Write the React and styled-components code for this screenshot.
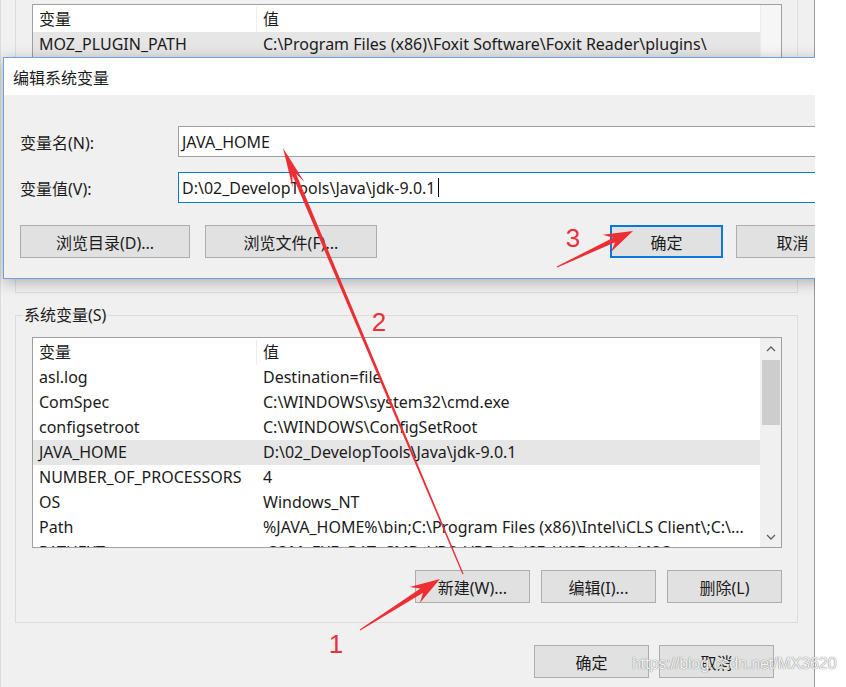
import React from 'react'
import styled, { createGlobalStyle } from 'styled-components'

const GlobalStyle = createGlobalStyle`
  html, body {
    margin: 0;
    padding: 0;
    background: #fff;
  }
  body {
    font-family: "Noto Sans", "Noto Sans CJK SC", sans-serif;
    font-size: 16px;
    color: #1b1b1b;
  }
  * {
    box-sizing: border-box;
  }
`

const userVars = [
  { name: 'MOZ_PLUGIN_PATH', value: 'C:\\Program Files (x86)\\Foxit Software\\Foxit Reader\\plugins\\', selected: true },
  { name: 'OneDrive', value: 'C:\\Users\\Administrator\\OneDrive' },
  { name: 'Path', value: 'C:\\Users\\Administrator\\AppData\\Local\\Microsoft\\WindowsApps;' },
  { name: 'TEMP', value: 'C:\\Users\\Administrator\\AppData\\Local\\Temp' },
  { name: 'TMP', value: 'C:\\Users\\Administrator\\AppData\\Local\\Temp' },
]

const systemVars = [
  { name: 'asl.log', value: 'Destination=file' },
  { name: 'ComSpec', value: 'C:\\WINDOWS\\system32\\cmd.exe' },
  { name: 'configsetroot', value: 'C:\\WINDOWS\\ConfigSetRoot' },
  { name: 'JAVA_HOME', value: 'D:\\02_DevelopTools\\Java\\jdk-9.0.1', selected: true },
  { name: 'NUMBER_OF_PROCESSORS', value: '4' },
  { name: 'OS', value: 'Windows_NT' },
  { name: 'Path', value: '%JAVA_HOME%\\bin;C:\\Program Files (x86)\\Intel\\iCLS Client\\;C:\\...' },
  { name: 'PATHEXT', value: '.COM;.EXE;.BAT;.CMD;.VBS;.VBE;.JS;.JSE;.WSF;.WSH;.MSC' },
]

function arrowPoints([x1, y1], [x2, y2], headLen, headW, shaftW) {
  const len = Math.hypot(x2 - x1, y2 - y1)
  const ux = (x2 - x1) / len
  const uy = (y2 - y1) / len
  const nx = -uy
  const ny = ux
  const bx = x2 - ux * headLen
  const by = y2 - uy * headLen
  const kx = x2 - ux * headLen * 0.72
  const ky = y2 - uy * headLen * 0.72
  const pts = [
    [x1 + nx * 0.6, y1 + ny * 0.6],
    [kx + (nx * shaftW) / 2, ky + (ny * shaftW) / 2],
    [bx + (nx * headW) / 2, by + (ny * headW) / 2],
    [x2, y2],
    [bx - (nx * headW) / 2, by - (ny * headW) / 2],
    [kx - (nx * shaftW) / 2, ky - (ny * shaftW) / 2],
    [x1 - nx * 0.6, y1 - ny * 0.6],
  ]
  return pts.map((p) => p.map((v) => v.toFixed(1)).join(',')).join(' ')
}

function VarList({ height, rows, scrolled }) {
  return (
    <ListBox $h={height}>
      <ListBody>
        <Row $header>
          <Cell $divider>变量</Cell>
          <Cell>值</Cell>
        </Row>
        {rows.map((r) => (
          <Row key={r.name} $selected={r.selected}>
            <Cell>{r.name}</Cell>
            <Cell>{r.value}</Cell>
          </Row>
        ))}
      </ListBody>
      {scrolled ? (
        <ScrollBar>
          <ScrollArrow>
            <svg width="10" height="6" viewBox="0 0 10 6">
              <path d="M1 5 L5 1 L9 5" fill="none" stroke="#606060" strokeWidth="1.3" />
            </svg>
          </ScrollArrow>
          <ScrollTrack>
            <Thumb />
          </ScrollTrack>
          <ScrollArrow>
            <svg width="10" height="6" viewBox="0 0 10 6">
              <path d="M1 1 L5 5 L9 1" fill="none" stroke="#606060" strokeWidth="1.3" />
            </svg>
          </ScrollArrow>
        </ScrollBar>
      ) : (
        <ScrollBar $idle />
      )}
    </ListBox>
  )
}

export default function App() {
  return (
    <Page>
      <GlobalStyle />
      <Scene>
        <MainWindow>
          <UserGroup>
            <VarList height={200} rows={userVars} />
            <ButtonRow>
              <Button>新建(N)...</Button>
              <Button>编辑(E)...</Button>
              <Button>删除(D)</Button>
            </ButtonRow>
          </UserGroup>

          <SystemGroup>
            <Legend>系统变量(S)</Legend>
            <VarList height={211} rows={systemVars} scrolled />
            <ButtonRow>
              <Button>新建(W)...</Button>
              <Button>编辑(I)...</Button>
              <Button>删除(L)</Button>
            </ButtonRow>
          </SystemGroup>

          <FooterRow>
            <Button>确定</Button>
            <Button>取消</Button>
          </FooterRow>
        </MainWindow>

        <Dialog>
          <TitleBar>编辑系统变量</TitleBar>
          <DialogBody>
            <FieldGrid>
              <FieldLabel>变量名(N):</FieldLabel>
              <TextInput>JAVA_HOME</TextInput>
              <FieldLabel>变量值(V):</FieldLabel>
              <TextInput $focused>
                D:\02_DevelopTools\Java\jdk-9.0.1
                <Caret />
              </TextInput>
            </FieldGrid>
            <DialogButtons>
              <ButtonGroup $gap={15}>
                <Button $w={170}>浏览目录(D)...</Button>
                <Button $w={172}>浏览文件(F)...</Button>
              </ButtonGroup>
              <ButtonGroup $gap={13}>
                <Button $w={113} $default>确定</Button>
                <Button $w={113}>取消</Button>
              </ButtonGroup>
            </DialogButtons>
          </DialogBody>
        </Dialog>

        <Annotations width="815" height="687" viewBox="0 0 815 687">
          <polygon points={arrowPoints([360, 630], [440, 579], 30, 19, 5)} />
          <polygon points={arrowPoints([463, 574], [283, 148], 40, 13, 4)} />
          <polygon points={arrowPoints([557, 267], [633, 231], 29, 19, 5)} />
          <text x="336" y="653">1</text>
          <text x="379" y="331">2</text>
          <text x="573" y="247">3</text>
        </Annotations>
      </Scene>
      <Watermark>https://blog.csdn.net/MX3620</Watermark>
    </Page>
  )
}

const Page = styled.div`
  position: relative;
  width: 846px;
  height: 687px;
  overflow: hidden;
  background: #fff;
`

const Scene = styled.div`
  position: relative;
  width: 815px;
  height: 687px;
  overflow: hidden;
`

const MainWindow = styled.div`
  width: 815px;
  height: 687px;
  background: #f0f0f0;
  border-left: 1px solid #dcdcdc;
  border-right: 1px solid #9c9c9c;
  padding: 0 16px 0 14px;
  display: flex;
  flex-direction: column;
`

const UserGroup = styled.div`
  height: 293px;
  flex-shrink: 0;
  border: 1px solid #dcdcdc;
  border-top: none;
  padding: 4px 15px 0 16px;
`

const SystemGroup = styled.fieldset`
  margin: 11px 0 0;
  padding: 11px 15px 19px 16px;
  border: 1px solid #dcdcdc;
  flex-shrink: 0;
`

const Legend = styled.legend`
  margin-left: -9px;
  padding: 0 1px;
  font-size: 16px;
  line-height: 22px;
  color: #1b1b1b;
`

const ListBox = styled.div`
  height: ${(p) => p.$h}px;
  background: #fff;
  border: 1px solid #a0a0a0;
  display: flex;
  overflow: hidden;
`

const ListBody = styled.div`
  flex: 1;
  min-width: 0;
  padding-top: 2px;
  overflow: hidden;
`

const Row = styled.div`
  display: grid;
  grid-template-columns: 224px 1fr;
  height: 25px;
  line-height: 25px;
  white-space: nowrap;
  background: ${(p) => (p.$selected ? '#e6e6e6' : 'transparent')};
`

const Cell = styled.div`
  padding-left: 6px;
  overflow: hidden;
  border-right: ${(p) => (p.$divider ? '1px solid #ececec' : 'none')};
`

const ScrollBar = styled.div`
  width: 21px;
  flex-shrink: 0;
  background: ${(p) => (p.$idle ? '#f6f6f6' : '#f0f0f0')};
  border-left: ${(p) => (p.$idle ? '1px solid #ececec' : 'none')};
  display: flex;
  flex-direction: column;
`

const ScrollArrow = styled.div`
  height: 21px;
  display: flex;
  align-items: center;
  justify-content: center;
`

const ScrollTrack = styled.div`
  flex: 1;
  padding: 1px 1px 0 2px;
`

const Thumb = styled.div`
  height: 65px;
  background: #cdcdcd;
`

const ButtonRow = styled.div`
  display: flex;
  justify-content: flex-end;
  gap: 11px;
  margin-top: 22px;
`

const FooterRow = styled.div`
  display: flex;
  justify-content: flex-end;
  gap: 10px;
  margin: 22px 24px 0 0;
`

const Button = styled.div`
  width: ${(p) => p.$w || 115}px;
  height: 33px;
  display: flex;
  align-items: center;
  justify-content: center;
  background: #e1e1e1;
  border: ${(p) => (p.$default ? '2px solid #0a78d7' : '1px solid #adadad')};
  font-size: 16px;
  color: #1b1b1b;
  white-space: nowrap;
`

const Dialog = styled.div`
  position: absolute;
  left: 3px;
  top: 57px;
  width: 862px;
  border: 1px solid #6fa3d8;
  background: #f0f0f0;
  box-shadow: 0 3px 14px rgba(0, 0, 0, 0.28);
`

const TitleBar = styled.div`
  height: 37px;
  background: #fff;
  padding-left: 9px;
  display: flex;
  align-items: center;
  font-size: 16px;
`

const DialogBody = styled.div`
  padding: 31px 15px 20px 16px;
`

const FieldGrid = styled.div`
  display: grid;
  grid-template-columns: 158px 1fr;
  row-gap: 15px;
  align-items: center;
`

const FieldLabel = styled.div`
  font-size: 16px;
`

const TextInput = styled.div`
  height: 31px;
  display: flex;
  align-items: center;
  padding: 0 3px;
  background: #fff;
  border: 1px solid ${(p) => (p.$focused ? '#0a78d7' : '#a0a0a0')};
  font-size: 16px;
  white-space: nowrap;
`

const Caret = styled.span`
  display: inline-block;
  width: 1px;
  height: 19px;
  margin-left: 2px;
  background: #000;
`

const DialogButtons = styled.div`
  display: flex;
  justify-content: space-between;
  margin-top: 22px;
`

const ButtonGroup = styled.div`
  display: flex;
  gap: ${(p) => p.$gap}px;
`

const Annotations = styled.svg`
  position: absolute;
  left: 0;
  top: 0;
  pointer-events: none;

  polygon {
    fill: #ec2f35;
  }

  text {
    fill: #e8313a;
    font-family: "Liberation Sans", sans-serif;
    font-size: 26px;
    text-anchor: middle;
  }
`

const Watermark = styled.div`
  position: absolute;
  left: 632px;
  top: 655px;
  font-family: "Liberation Sans", sans-serif;
  font-size: 16px;
  letter-spacing: -0.1px;
  color: rgba(255, 255, 255, 0.9);
  text-shadow: 0 0 1px #8a8a8a, 0 0 1px #8a8a8a;
  white-space: nowrap;
`
